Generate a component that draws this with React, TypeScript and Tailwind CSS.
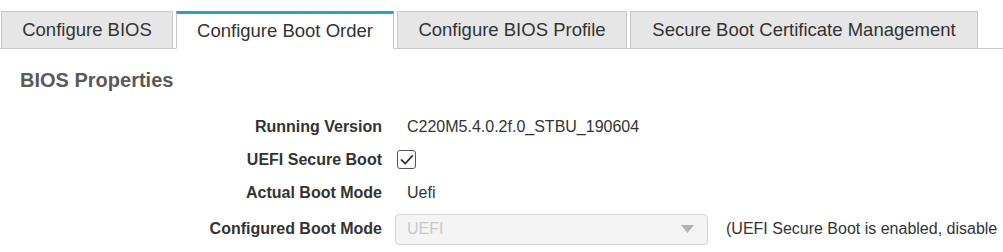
import React from "react";

const tabs = [
  { label: "Configure BIOS", w: "w-[172px]" },
  { label: "Configure Boot Order", w: "w-[218px]", active: true },
  { label: "Configure BIOS Profile", w: "w-[230px]" },
  { label: "Secure Boot Certificate Management", w: "w-[348px]" },
];

function Tabs() {
  return (
    <div className="flex gap-[3px] pl-[1px] pt-[11px] border-b border-[#c8c8c8]">
      {tabs.map((t) => (
        <div
          key={t.label}
          className={`${t.w} h-[38px] -mb-px flex items-center justify-center border border-[#c8c8c8] text-[18.5px] text-[#333] whitespace-nowrap ${
            t.active ? "bg-white border-t-[3px] border-t-[#369bc0] border-b-white" : "bg-[#e6e6e6]"
          }`}
        >
          {t.label}
        </div>
      ))}
    </div>
  );
}

function Checkbox() {
  return (
    <div className="w-[19px] h-[19px] ml-[2px] border-[1.5px] border-[#555] rounded-[3px] flex items-center justify-center bg-white">
      <svg width="16" height="16" viewBox="0 0 16 16" fill="none">
        <path d="M2.5 8 L6.2 11.7 L13.3 3.8" stroke="#3a3a3a" strokeWidth="1.8" strokeLinecap="round" strokeLinejoin="round" />
      </svg>
    </div>
  );
}

function Row({ label, children, tall }: { label: string; children: React.ReactNode; tall?: boolean }) {
  return (
    <div className={`flex items-center ${tall ? "h-[40px]" : "h-[33px]"}`}>
      <div className="w-[382px] text-right font-bold text-[16px] text-[#333] whitespace-nowrap">{label}</div>
      <div className="ml-[13px] flex items-center text-[16px] text-[#333] whitespace-nowrap">{children}</div>
    </div>
  );
}

export default function App() {
  return (
    <div className="w-[1003px] h-[252px] overflow-hidden bg-white" style={{ fontFamily: '"Liberation Sans", Arial, sans-serif' }}>
      <Tabs />
      <h2 className="mt-[19px] ml-[20px] text-[20px] leading-[24px] font-bold text-[#595959]">BIOS Properties</h2>
      <div className="mt-[18px]">
        <Row label="Running Version">
          <span className="pl-[12px]">C220M5.4.0.2f.0_STBU_190604</span>
        </Row>
        <Row label="UEFI Secure Boot">
          <Checkbox />
        </Row>
        <Row label="Actual Boot Mode">
          <span className="pl-[12px]">Uefi</span>
        </Row>
        <Row label="Configured Boot Mode" tall>
          <div className="w-[313px] h-[31px] rounded-[4px] border border-[#d4d4d4] bg-[#f4f4f4] flex items-center justify-between pl-[11px] pr-[13px]">
            <span className="text-[#c8c8c8]">UEFI</span>
            <svg width="13" height="8" viewBox="0 0 13 8">
              <path d="M0 0 H13 L6.5 8 Z" fill="#b3b3b3" />
            </svg>
          </div>
          <span className="ml-[18px]">(UEFI Secure Boot is enabled, disable</span>
        </Row>
      </div>
    </div>
  );
}
